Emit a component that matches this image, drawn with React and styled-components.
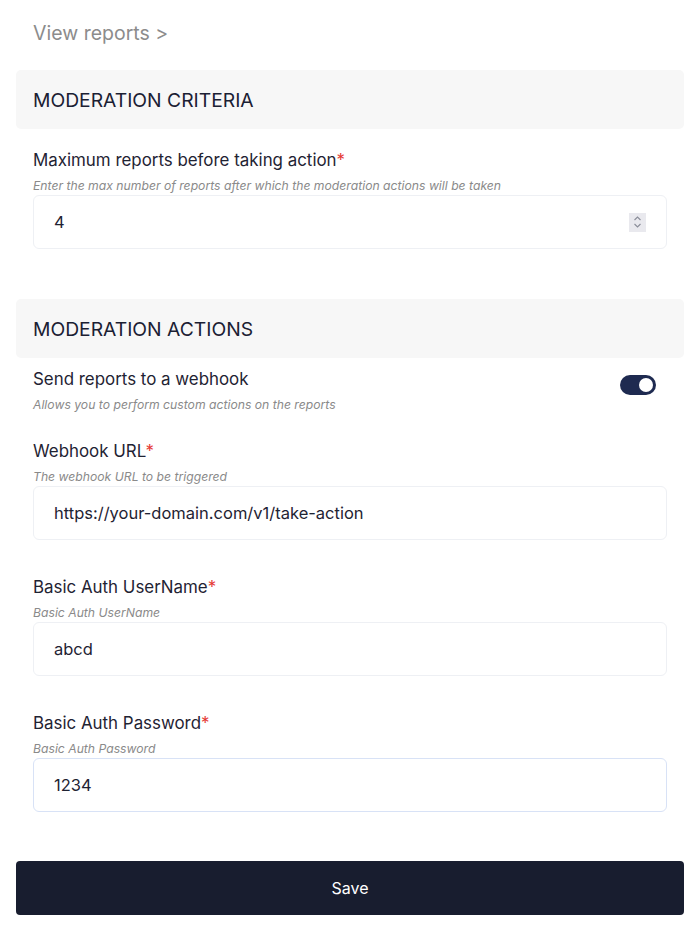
import React, { useState } from "react"
import styled, { createGlobalStyle } from "styled-components"

const GlobalStyle = createGlobalStyle`
  * { box-sizing: border-box; }
  body {
    margin: 0;
    background: #ffffff;
    font-family: Inter, "Noto Sans", sans-serif;
    color: #1b2030;
  }
`

const App = () => {
  const [webhook, setWebhook] = useState(true)

  return (
    <Page>
      <GlobalStyle />
      <ViewLink href="#">View reports &gt;</ViewLink>

      <SectionHeader>MODERATION CRITERIA</SectionHeader>
      <Field $top={20}>
        <Label>Maximum reports before taking action<Star>*</Star></Label>
        <Hint>Enter the max number of reports after which the moderation actions will be taken</Hint>
        <InputBox>
          <Input defaultValue="4" />
          <Spinner>
            <svg width="9" height="14" viewBox="0 0 9 14" fill="none" stroke="#8a8d99" strokeWidth="1.1">
              <path d="M1.5 5 L4.5 2 L7.5 5" />
              <path d="M1.5 9 L4.5 12 L7.5 9" />
            </svg>
          </Spinner>
        </InputBox>
      </Field>

      <SectionHeader $top={50}>MODERATION ACTIONS</SectionHeader>
      <ToggleRow>
        <div>
          <Label>Send reports to a webhook</Label>
          <Hint>Allows you to perform custom actions on the reports</Hint>
        </div>
        <Toggle $on={webhook} onClick={() => setWebhook(!webhook)} aria-label="toggle webhook" />
      </ToggleRow>

      <Field $top={27}>
        <Label>Webhook URL<Star>*</Star></Label>
        <Hint>The webhook URL to be triggered</Hint>
        <InputBox>
          <Input defaultValue="https://your-domain.com/v1/take-action" />
        </InputBox>
      </Field>

      <Field $top={36}>
        <Label>Basic Auth UserName<Star>*</Star></Label>
        <Hint>Basic Auth UserName</Hint>
        <InputBox>
          <Input defaultValue="abcd" />
        </InputBox>
      </Field>

      <Field $top={36}>
        <Label>Basic Auth Password<Star>*</Star></Label>
        <Hint>Basic Auth Password</Hint>
        <InputBox $focused>
          <Input defaultValue="1234" />
        </InputBox>
      </Field>

      <SaveButton type="button">Save</SaveButton>
    </Page>
  )
}

const Page = styled.div`
  width: 700px;
  padding: 21px 16px 17px;
  display: flex;
  flex-direction: column;
`

const ViewLink = styled.a`
  display: block;
  padding: 0 17px;
  font-size: 19.5px;
  line-height: 24px;
  color: #8c8c8c;
  text-decoration: none;
`

const SectionHeader = styled.h2`
  margin: ${(p) => p.$top || 25}px 0 0;
  height: 59px;
  padding: 0 17px;
  display: flex;
  align-items: center;
  background: #f7f7f7;
  border-radius: 5px;
  font-size: 19.3px;
  font-weight: 400;
  color: #1b2033;
`

const Field = styled.div`
  margin-top: ${(p) => p.$top}px;
  padding: 0 17px;
  display: flex;
  flex-direction: column;
`

const Label = styled.label`
  display: block;
  font-size: 16.9px;
  line-height: 22px;
  color: #1f2333;
`

const Star = styled.span`
  color: #e53935;
`

const Hint = styled.p`
  margin: 7px 0 0;
  font-size: 12.2px;
  line-height: 16px;
  font-style: italic;
  color: #8a8a8a;
`

const InputBox = styled.div`
  margin-top: 1px;
  height: 54px;
  display: flex;
  align-items: center;
  padding: 0 20px;
  border: 1px solid ${(p) => (p.$focused ? "#d8e2f6" : "#eef0f4")};
  border-radius: 6px;
  background: #fff;
`

const Input = styled.input`
  flex: 1;
  border: none;
  outline: none;
  padding: 0;
  font-family: Inter, "Noto Sans", sans-serif;
  font-size: 16.5px;
  color: #1f2333;
  background: transparent;
`

const Spinner = styled.span`
  width: 17px;
  height: 19px;
  display: flex;
  align-items: center;
  justify-content: center;
  background: #e9e9ee;
`

const ToggleRow = styled.div`
  margin-top: 10px;
  padding: 0 28px 0 17px;
  display: flex;
  justify-content: space-between;
  align-items: flex-start;
`

const Toggle = styled.button`
  margin-top: 7px;
  width: 36px;
  height: 20px;
  border: none;
  padding: 0;
  border-radius: 10px;
  background: ${(p) => (p.$on ? "#1e2a50" : "#cfd3dc")};
  position: relative;
  cursor: pointer;

  &::after {
    content: "";
    position: absolute;
    top: 3px;
    left: ${(p) => (p.$on ? "19px" : "3px")};
    width: 14px;
    height: 14px;
    border-radius: 50%;
    background: #fff;
  }
`

const SaveButton = styled.button`
  margin-top: 49px;
  height: 54px;
  border: none;
  border-radius: 4px;
  background: #181d2f;
  color: #fff;
  font-family: Inter, "Noto Sans", sans-serif;
  font-size: 16px;
  cursor: pointer;
`

export default App
